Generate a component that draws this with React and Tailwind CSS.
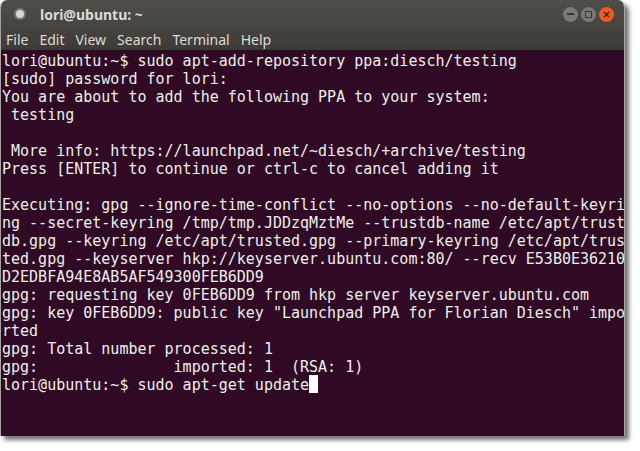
const lines = [
  "lori@ubuntu:~$ sudo apt-add-repository ppa:diesch/testing",
  "[sudo] password for lori:",
  "You are about to add the following PPA to your system:",
  " testing",
  "",
  " More info: https://launchpad.net/~diesch/+archive/testing",
  "Press [ENTER] to continue or ctrl-c to cancel adding it",
  "",
  "Executing: gpg --ignore-time-conflict --no-options --no-default-keyri",
  "ng --secret-keyring /tmp/tmp.JDDzqMztMe --trustdb-name /etc/apt/trust",
  "db.gpg --keyring /etc/apt/trusted.gpg --primary-keyring /etc/apt/trus",
  "ted.gpg --keyserver hkp://keyserver.ubuntu.com:80/ --recv E53B0E36210",
  "D2EDBFA94E8AB5AF549300FEB6DD9",
  "gpg: requesting key 0FEB6DD9 from hkp server keyserver.ubuntu.com",
  'gpg: key 0FEB6DD9: public key "Launchpad PPA for Florian Diesch" impo',
  "rted",
  "gpg: Total number processed: 1",
  "gpg:               imported: 1  (RSA: 1)",
];

export default function App() {
  return (
    <div className="w-[640px] h-[451px] bg-white overflow-hidden">
      <div className="w-[625px] h-[436px] flex flex-col rounded-t-[7px] overflow-hidden shadow-[4px_4px_4px_rgba(0,0,0,0.55)] border-x border-[#a8a49c] border-b-0">
        <div className="h-[50px] shrink-0 bg-gradient-to-b from-[#4f4e49] to-[#3c3b37] font-['Noto_Sans',sans-serif] text-[#dfdbd2]">
          <div className="h-[28px] flex items-center pl-[13px] pr-[10px]">
            <span className="w-[12px] h-[12px] rounded-full bg-[#d8d5cf] border-2 border-[#77756f]"></span>
            <span className="ml-[14px] text-[14px] font-bold">lori@ubuntu: ~</span>
            <div className="ml-auto flex gap-[3px]">
              <div className="w-[15px] h-[15px] rounded-full bg-[#7a7973] flex items-center justify-center">
                <div className="w-[7px] h-[2px] bg-[#37362f]"></div>
              </div>
              <div className="w-[15px] h-[15px] rounded-full bg-[#7a7973] flex items-center justify-center">
                <div className="w-[7px] h-[7px] border border-[#37362f]"></div>
              </div>
              <div className="w-[15px] h-[15px] rounded-full bg-[#ee5a20] flex items-center justify-center">
                <svg width="7" height="7" viewBox="0 0 7 7"><path d="M1 1L6 6M6 1L1 6" stroke="#3c2010" strokeWidth="1.4" /></svg>
              </div>
            </div>
          </div>
          <div className="h-[22px] flex items-center gap-[11px] pl-[5px] text-[14px]">
            <span>File</span><span>Edit</span><span>View</span><span>Search</span><span>Terminal</span><span>Help</span>
          </div>
        </div>
        <div className="flex-1 bg-[#300a24] text-[#eeeeec] font-['DejaVu_Sans_Mono',monospace] text-[15px] leading-[20px] pl-[1px] pt-[1px] whitespace-pre overflow-hidden">
          {lines.map((l, i) => <div key={i} className="h-[18px]">{l}</div>)}
          <div className="h-[18px] flex">
            <span>lori@ubuntu:~$ sudo apt-get update</span>
            <span className="w-[9px] h-[18px] bg-white"></span>
          </div>
        </div>
      </div>
    </div>
  );
}
